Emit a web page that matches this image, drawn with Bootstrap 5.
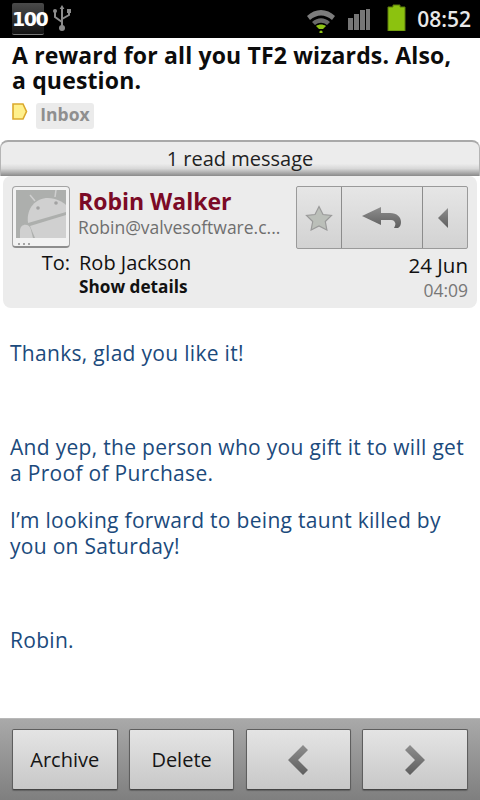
<!DOCTYPE html>
<html lang="en">
<head>
  <meta charset="UTF-8" />
  <title>Inbox message</title>
  <link href="https://cdn.jsdelivr.net/npm/bootstrap@5.3.0/dist/css/bootstrap.min.css" rel="stylesheet" />
  <style>
    html, body { height: 800px; overflow: hidden; }
    body { width: 480px; font-family: "Open Sans", "Noto Sans", sans-serif; background: #fff; color: #111; }
    .status-bar { height: 38px; background: #000; padding: 3px 0 0 12px; }
    .batt-notice { width: 32px; height: 32px; border-radius: 2px; background: linear-gradient(#4a4a4a, #141414); border-bottom: 1px solid #777;
      color: #fff; font-weight: 700; font-size: 19px; letter-spacing: -1.5px; line-height: 32px; text-align: center; font-family: "DejaVu Sans", sans-serif; }
    .clock { color: #e8e8e8; font-size: 21px; font-weight: 600; width: 56px; margin-right: 9px; text-align: right; line-height: 33px; }
    .wifi-icon { margin-right: 11px; }
    .subject { font-size: 23px; line-height: 24.5px; font-weight: 700; letter-spacing: .15px; padding: 5px 10px 0 12px; height: 65px; color: #0c0c0c; }
    .label-row { padding-left: 12px; height: 37px; }
    .inbox-chip { background: #ebebeb; color: #8f8f8f; font-weight: 700; font-size: 17.5px; line-height: 22px; height: 26px; width: 58px; border-radius: 3px; text-align: center; }
    .read-bar { height: 36px; margin: 0; border-radius: 8px 8px 0 0; text-align: center; font-size: 20px; line-height: 33px; color: #222;
      background: linear-gradient(#ececec 0, #ececec 64%, #d8d8d8 78%, #8a8a8a 100%); border-top: 2px solid #a9a9a9; border-left: 1px solid #b5b5b5; border-right: 1px solid #b5b5b5; }
    .head-card { margin: 0 3px; height: 132px; background: #ececec; border-radius: 8px; padding: 10px 9px 0 9px; }
    .avatar { width: 58px; height: 62px; border: 1px solid #a4a4a4; border-bottom: 2px solid #8e8e8e; border-radius: 4px; background: #f2f2f2; flex: none; padding: 3px 3px 0; }
    .avatar svg { display: block; }
    .sender-name { color: #7b0a26; font-size: 23px; font-weight: 700; line-height: 28px; margin-top: 1px; }
    .sender-mail { color: #6f6f6f; font-size: 17.5px; line-height: 24px; white-space: nowrap; }
    .sender-box { width: 217px; overflow: hidden; padding-left: 8px; }
    .action-group { width: 172px; height: 63px; border: 1px solid #9a9a9a; border-radius: 2px; background: linear-gradient(#e6e6e6, #d2d2d2); flex: none; }
    .action-group > div { border-right: 1px solid #8c8c8c; }
    .action-group > div:last-child { border-right: 0; }
    .act-star { width: 45px; }
    .act-reply { width: 81px; }
    .act-more { width: 44px; }
    .to-row { margin-top: 1px; }
    .to-label { width: 67px; text-align: right; padding-right: 9px; font-size: 20px; line-height: 26px; }
    .to-name { font-size: 20px; line-height: 26px; }
    .details-link { font-size: 17.2px; font-weight: 700; line-height: 22px; color: #111; }
    .date-big { font-size: 20.5px; line-height: 26px; color: #111; text-align: right; margin-top: 2px; }
    .date-small { font-size: 17.5px; line-height: 25px; color: #777; text-align: right; }
    .mail-text { padding: 32px 10px 0; color: #1b4a7c; font-size: 21px; line-height: 26.5px; letter-spacing: .3px; }
    .mail-text p { margin: 0; }
    .gap-lg { margin-bottom: 67px !important; }
    .gap-sm { margin-bottom: 20px !important; }
    .bottom-bar { position: fixed; left: 0; right: 0; bottom: 0; height: 82px; background: linear-gradient(#a9a9a9, #7f7f7f); padding: 10px 12px 0; border-top: 1px solid #b8b8b8; }
    .bar-btn { width: 105.5px; height: 61px; border: 1px solid #5e5e5e; border-bottom-color: #444; border-radius: 2px; background: linear-gradient(#e4e4e4, #c8c8c8);
      font-size: 20px; color: #151515; padding: 0; box-shadow: 0 1px 1px rgba(0,0,0,.25); }
  </style>
</head>
<body>
  <svg width="0" height="0" class="d-block">
    <defs>
      <linearGradient id="iconGrey" x1="0" y1="0" x2="0" y2="1">
        <stop offset="0" stop-color="#8e8e8e"/>
        <stop offset="1" stop-color="#5e5e5e"/>
      </linearGradient>
    </defs>
  </svg>

  <div class="status-bar d-flex align-items-start">
    <div class="batt-notice">100</div>
    <svg class="ms-2" width="20" height="28" viewBox="0 0 20 28">
      <g fill="#8c8c8c" stroke="#8c8c8c">
        <path d="M10 2 7.6 6h4.8z" stroke="none"/>
        <path d="M10 5v19" stroke-width="2" fill="none"/>
        <path d="M3 9v5l7 5M17 9v3l-7 4" stroke-width="2" fill="none"/>
        <circle cx="3" cy="8" r="2" stroke="none"/>
        <rect x="15" y="6" width="4" height="4" stroke="none"/>
        <circle cx="10" cy="25" r="3" stroke="none"/>
      </g>
    </svg>
    <div class="ms-auto d-flex align-items-start">
      <svg width="30" height="26" viewBox="0 0 30 26" class="mt-1 wifi-icon">
        <path d="M1 9C9 1 21 1 29 9l-3 4C19 7 11 7 4 13z" fill="#7c7c7c"/>
        <path d="M6 15c6-5 12-5 18 0l-3 3c-4-3-8-3-12 0z" fill="#6a6a6a"/>
        <path d="M10 19c3-2 7-2 10 0l-3 3h-4z" fill="#8fc415"/>
        <circle cx="15" cy="25" r="1.6" fill="#8fc415"/>
      </svg>
      <svg width="24" height="24" viewBox="0 0 24 24" class="mt-1 me-3">
        <path d="M1 14h5v12H1zM7 10h5v16H7zM13 6h5v20h-5zM19 5h4v21h-4z" fill="#767676" transform="translate(0 -3)"/>
      </svg>
      <svg width="20" height="28" viewBox="0 0 20 28" class="me-2">
        <path d="M6 2h7v2h5v24H1V4h5z" fill="#8cc20f" stroke="#5c7d0c" stroke-width="1"/>
      </svg>
      <div class="clock">08:52</div>
    </div>
  </div>

  <div class="subject">A reward for all you TF2 wizards. Also, a question.</div>

  <div class="label-row d-flex align-items-start">
    <svg width="16" height="17" viewBox="0 0 16 17">
      <path d="M1 1h10l3.500 7.500-3.500 7.500H1z" fill="#fff08c" stroke="#dba92c" stroke-width="1.600"/>
    </svg>
    <div class="inbox-chip ms-2">Inbox</div>
  </div>

  <div class="read-bar">1 read message</div>

  <div class="head-card">
    <div class="d-flex">
      <div class="avatar">
        <svg width="50" height="57" viewBox="0 0 50 57">
          <rect width="50" height="48" fill="#adafad"/>
          <path d="M14 5l5 6M40 0l-1 7" stroke="#cfcfcf" stroke-width="1.500"/>
          <path d="M12 33C10 18 20 8 32 8c8 0 15 4 18 7v7z" fill="#d0d0d0"/>
          <path d="M14 36 50 25v23H19z" fill="#d0d0d0"/>
          <path d="M4 48V41c0-8 10-8 11-1l2 8z" fill="#d0d0d0"/>
          <circle cx="22" cy="18" r="1.800" fill="#a2a2a2"/>
          <circle cx="40" cy="13" r="1.800" fill="#a2a2a2"/>
          <circle cx="3" cy="54" r="1" fill="#8a8a8a"/>
          <circle cx="8" cy="54" r="1" fill="#8a8a8a"/>
          <circle cx="13" cy="54" r="1" fill="#8a8a8a"/>
        </svg>
      </div>
      <div class="sender-box">
        <div class="sender-name">Robin Walker</div>
        <div class="sender-mail">Robin@valvesoftware.c...</div>
      </div>
      <div class="action-group d-flex ms-auto">
        <div class="act-star d-flex align-items-center justify-content-center">
          <svg width="28" height="26" viewBox="0 0 28 26">
            <path d="M14 1.500 18 9.500l8.500 1-6.200 6 1.600 8.500L14 21l-7.900 4 1.600-8.500-6.200-6 8.500-1z" fill="#bbbfb9" stroke="#9a9a9a" stroke-width="1.200"/>
          </svg>
        </div>
        <div class="act-reply d-flex align-items-center justify-content-center">
          <svg width="40" height="23" viewBox="0 0 40 23">
            <path d="M0 10 19 1v6h9c7 0 11 4 11 9 0 3-1 5-3 6h-4c1-2 2-4 1-5.500C32 14 30 14 27 14h-8v5z" fill="url(#iconGrey)"/>
          </svg>
        </div>
        <div class="act-more d-flex align-items-center justify-content-center">
          <svg width="16" height="22" viewBox="0 0 16 22"><path d="M11 1v20L1 11z" fill="url(#iconGrey)"/></svg>
        </div>
      </div>
    </div>
    <div class="d-flex to-row">
      <div class="to-label">To:</div>
      <div class="flex-grow-1">
        <div class="to-name">Rob Jackson</div>
        <div class="details-link">Show details</div>
      </div>
      <div>
        <div class="date-big">24 Jun</div>
        <div class="date-small">04:09</div>
      </div>
    </div>
  </div>

  <div class="mail-text">
    <p class="gap-lg">Thanks, glad you like it!</p>
    <p class="gap-sm">And yep, the person who you gift it to will get a Proof of Purchase.</p>
    <p class="gap-lg">I’m looking forward to being taunt killed by you on Saturday!</p>
    <p>Robin.</p>
  </div>

  <div class="bottom-bar d-flex justify-content-between">
    <button type="button" class="btn bar-btn">Archive</button>
    <button type="button" class="btn bar-btn">Delete</button>
    <button type="button" class="btn bar-btn">
      <svg width="22" height="32" viewBox="0 0 22 32"><path d="M16 1l5 5-10 10 10 10-5 5L1 16z" fill="url(#iconGrey)"/></svg>
    </button>
    <button type="button" class="btn bar-btn">
      <svg width="22" height="32" viewBox="0 0 22 32"><path d="M6 1 1 6l10 10L1 26l5 5 15-15z" fill="url(#iconGrey)"/></svg>
    </button>
  </div>

  <script src="https://cdn.jsdelivr.net/npm/bootstrap@5.3.0/dist/js/bootstrap.bundle.min.js"></script>
</body>
</html>
